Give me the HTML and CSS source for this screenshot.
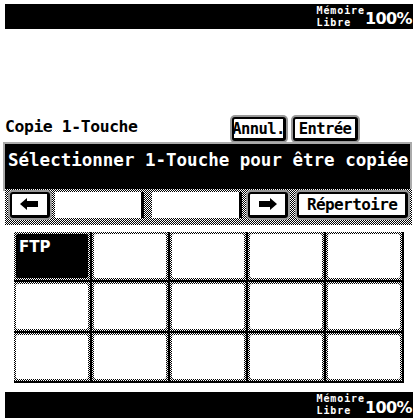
FILE: index.html
```html
<!DOCTYPE html>
<html>
<head>
<meta charset="utf-8">
<link rel="stylesheet" href="styles.css">
</head>
<body>
<div class="screen">
  <div class="bar top">
    <div class="mem"><div class="ml">Mémoire</div><div class="ml">Libre</div></div>
    <div class="pct">100%</div>
  </div>

  <div class="header">
    <div class="title">Copie 1-Touche</div>
    <div class="btn annul">Annul.</div>
    <div class="btn entree">Entrée</div>
  </div>

  <div class="msg">Sélectionner 1-Touche pour être copiée</div>

  <div class="nav">
    <div class="btn arrow left-arrow">
      <svg width="18" height="12" viewBox="0 0 18 12"><path d="M0 6 L7 0 V3 H18 V9 H7 V12 Z" fill="#000"/></svg>
    </div>
    <div class="field f1"></div>
    <div class="field f2"></div>
    <div class="btn arrow right-arrow">
      <svg width="18" height="12" viewBox="0 0 18 12"><path d="M18 6 L11 0 V3 H0 V9 H11 V12 Z" fill="#000"/></svg>
    </div>
    <div class="btn rep">Répertoire</div>
  </div>

  <div class="grid">
    <div class="cell sel"><div class="in">FTP</div></div>
    <div class="cell"><div class="in"></div></div>
    <div class="cell"><div class="in"></div></div>
    <div class="cell"><div class="in"></div></div>
    <div class="cell"><div class="in"></div></div>
    <div class="cell"><div class="in"></div></div>
    <div class="cell"><div class="in"></div></div>
    <div class="cell"><div class="in"></div></div>
    <div class="cell"><div class="in"></div></div>
    <div class="cell"><div class="in"></div></div>
    <div class="cell"><div class="in"></div></div>
    <div class="cell"><div class="in"></div></div>
    <div class="cell"><div class="in"></div></div>
    <div class="cell"><div class="in"></div></div>
    <div class="cell"><div class="in"></div></div>
  </div>

  <div class="bar bottom">
    <div class="mem"><div class="ml">Mémoire</div><div class="ml">Libre</div></div>
    <div class="pct">100%</div>
  </div>
</div>
</body>
</html>
```

FILE: styles.css
```css
html, body {
  margin: 0;
  padding: 0;
  background: #fff;
}
body {
  width: 415px;
  height: 418px;
  overflow: hidden;
  font-family: "DejaVu Sans Mono", "Liberation Mono", monospace;
  font-weight: bold;
  color: #000;
}
.screen {
  display: flex;
  flex-direction: column;
  width: 415px;
  height: 418px;
}
.bar {
  background: #000;
  color: #fff;
  display: flex;
  justify-content: flex-end;
  align-items: center;
  height: 25px;
  margin: 0 2px 0 5px;
  padding-right: 1px;
}
.bar.top { margin-top: 4px; }
.bar.bottom { margin-top: auto; height: 26px; }
.mem {
  display: flex;
  flex-direction: column;
  font-size: 10px;
  letter-spacing: 0.9px;
}
.ml {
  height: 12px;
  line-height: 12px;
}
.pct {
  font-family: "DejaVu Sans", sans-serif;
  font-size: 16px;
  letter-spacing: -0.6px;
  margin-top: 4px;
}
.header {
  display: flex;
  align-items: flex-start;
  height: 25px;
  margin: 88px 0 0 5px;
}
.title {
  font-size: 16.4px;
  letter-spacing: -0.4px;
  width: 227px;
  line-height: 18px;
  margin-top: 1px;
}
.btn {
  background: #fff;
  border: 2px solid #000;
  border-right-width: 3px;
  border-bottom-width: 3px;
  border-radius: 3px;
  box-shadow: 0 0 0 2px #999;
  display: flex;
  align-items: center;
  justify-content: center;
  font-size: 15.5px;
  letter-spacing: -0.6px;
  box-sizing: border-box;
}
.annul { width: 54px; height: 24px; }
.entree { width: 65px; height: 24px; margin-left: 7px; }
.msg {
  background: #000;
  color: #fff;
  height: 45px;
  margin: 2px 5px 0 5px;
  box-sizing: border-box;
  padding: 6px 0 0 3px;
  font-size: 17.5px;
  letter-spacing: 0;
  white-space: nowrap;
  overflow: hidden;
  box-shadow: 0 0 0 2px #aaa;
}
.nav {
  display: flex;
  align-items: center;
  height: 36px;
  margin: 0 3px 0 5px;
  padding: 0 4px 5px 5px;
  box-sizing: border-box;
  background-color: #fff;
  background-image: repeating-conic-gradient(#000 0 25%, #fff 0 50%);
  background-size: 2px 2px;
}
.arrow { width: 40px; height: 26px; }
.field {
  background: #fff;
  height: 26px;
  border-right: 3px solid #000;
  box-sizing: border-box;
}
.f1 { width: 89px; margin-left: 5px; }
.f2 { width: 91px; margin-left: 8px; }
.right-arrow { margin-left: 6px; }
.rep { width: 111px; height: 26px; margin-left: 9px; font-size: 16px; }
.grid {
  display: grid;
  grid-template-columns: repeat(5, 1fr);
  grid-template-rows: repeat(3, 1fr);
  gap: 2px;
  width: 390px;
  height: 151px;
  margin: 7px 0 0 14px;
  background: #000;
  padding: 0 2px 2px 0;
  box-sizing: border-box;
}
.cell {
  background-color: #fff;
  background-image: repeating-conic-gradient(#000 0 25%, #fff 0 50%);
  background-size: 2px 2px;
  padding: 2px;
}
.in {
  background: #fff;
  height: 100%;
  border-radius: 2px;
  box-sizing: border-box;
}
.sel .in {
  background: #000;
  color: #fff;
  font-size: 15px;
  padding: 4px 0 0 3px;
  font-family: "DejaVu Sans", sans-serif;
}
```
